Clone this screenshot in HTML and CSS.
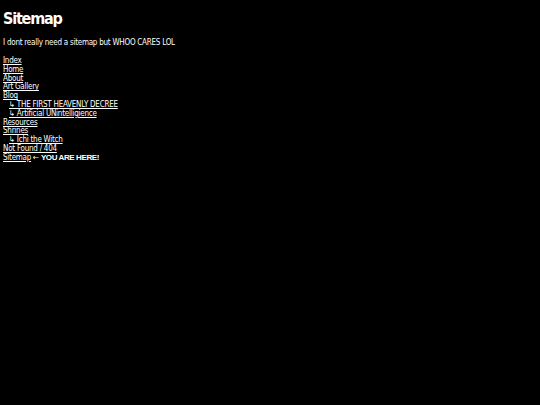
FILE: index.html
```html
<!DOCTYPE html>
<html lang="en">
<head>
  <meta charset="UTF-8" />
  <title>Sitemap</title>
  <link rel="stylesheet" href="styles.css">
</head>
<body>
  <h1>Sitemap</h1>
  <p>I dont really need a sitemap but WHOO CARES LOL</p>

  <!-- site links -->
  <ul class="sitemap">
    <li><a href="#">Index</a></li>
    <li><a href="#">Home</a></li>
    <li><a href="#">About</a></li>
    <li><a href="#">Art Gallery</a></li>
    <li><a href="#">Blog</a></li>
    <li class="sub"><a href="#">↳ THE FIRST HEAVENLY DECREE</a></li>
    <li class="sub"><a href="#">↳ Artificial UNintelligience</a></li>
    <li><a href="#">Resources</a></li>
    <li><a href="#">Shrines</a></li>
    <li class="sub"><a href="#">↳ Ichi the Witch</a></li>
    <li><a href="#">Not Found / 404</a></li>
    <li><a href="#">Sitemap</a> ← <b class="here">YOU ARE HERE!</b></li>
  </ul>
</body>
</html>
```
FILE: styles.css
```css
body {
  margin: 3px;
  background-color: #000;
  color: #fff;
  font-family: "DejaVu Sans Condensed", "DejaVu Sans", sans-serif;
  font-size: 8px;
  letter-spacing: -0.25px;
}

h1 {
  font-size: 16px;
  letter-spacing: -1.2px;
  margin: 1px 0 0;
  line-height: 29px;
}

p {
  margin: 5px 0 10px;
  line-height: 9px;
}

a {
  color: #fff;
}

.sitemap {
  list-style: none;
  margin: 0;
  padding: 0;
}

.sitemap li {
  line-height: 8.8px;
}

.sitemap .sub {
  padding-left: 6px;
}

.here {
  font-family: "Liberation Sans", sans-serif;
  letter-spacing: -0.4px;
}
```
